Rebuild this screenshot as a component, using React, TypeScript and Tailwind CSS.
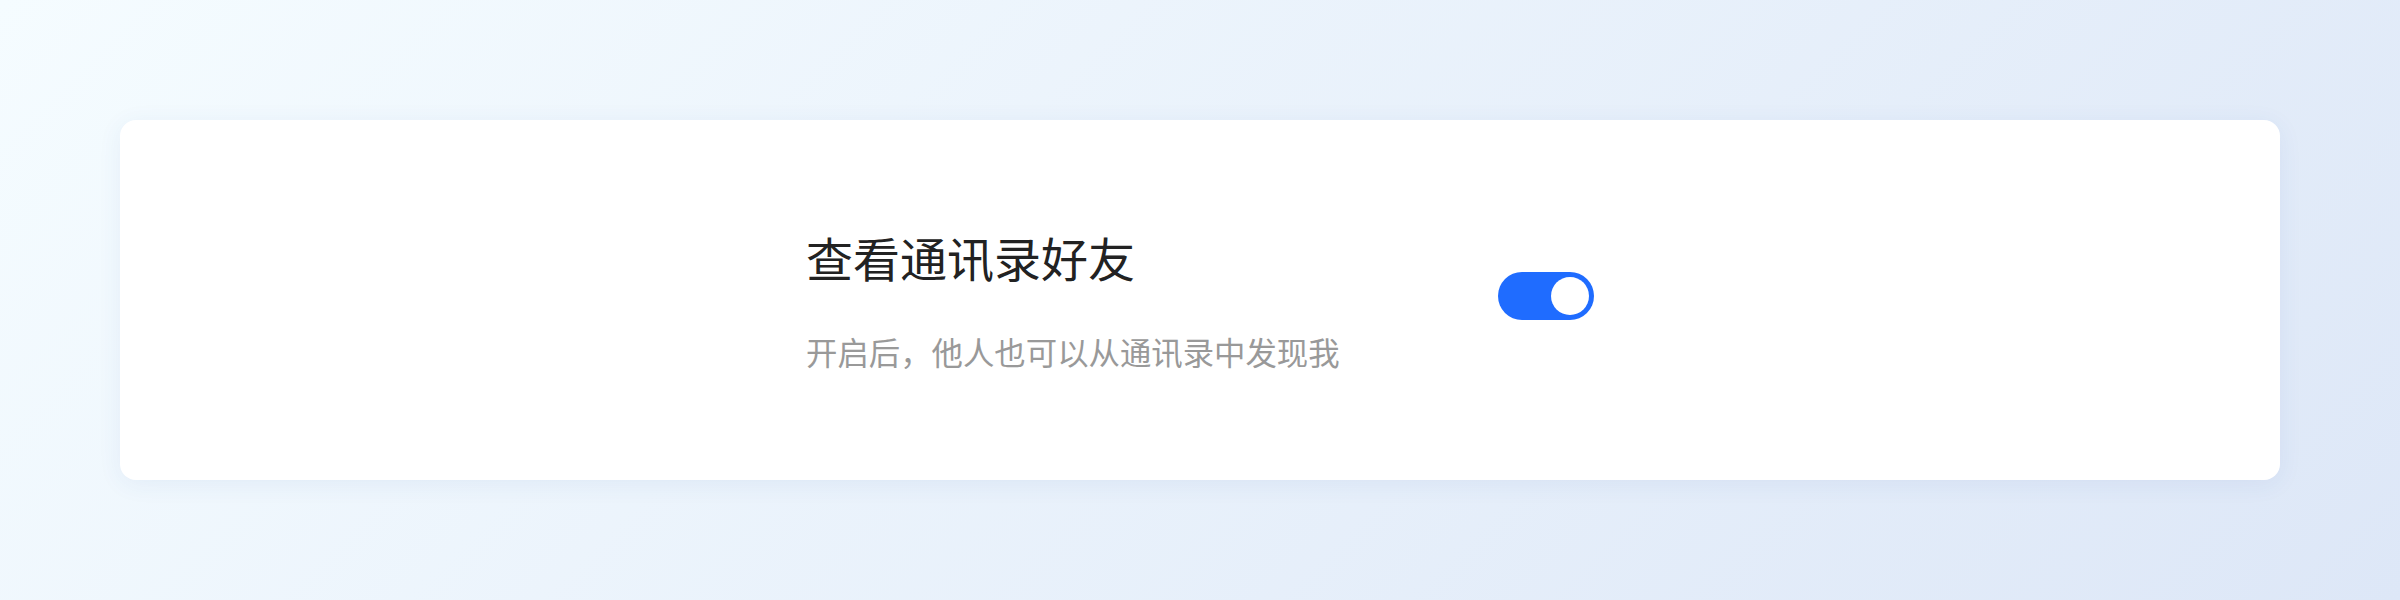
import React, { useState } from "react";

export default function App() {
  const [enabled, setEnabled] = useState(true);

  return (
    <div
      className="w-full h-[600px] px-[120px] py-[120px] bg-[linear-gradient(135deg,#f5fcff,#dde7f7)]"
      style={{ fontFamily: '"Noto Sans CJK SC", "Noto Sans", sans-serif' }}
    >
      <div className="h-[360px] w-full rounded-2xl bg-white shadow-[0_4px_24px_rgba(40,90,170,0.07)] flex items-center justify-center">
        <div className="w-[788px] flex items-center justify-between">
          <div className="flex flex-col pb-[4px]">
            <div className="text-[47px] leading-[72px] text-[#222222]">查看通讯录好友</div>
            <div className="mt-[35px] text-[31.4px] leading-[48px] text-[#999999]">
              开启后，他人也可以从通讯录中发现我
            </div>
          </div>
          <button
            type="button"
            role="switch"
            aria-checked={enabled}
            onClick={() => setEnabled(!enabled)}
            className={`mb-[9px] w-[96px] h-[48px] rounded-full p-[5px] flex items-center transition-colors ${
              enabled ? "bg-[#1f6cff] justify-end" : "bg-[#d9d9d9] justify-start"
            }`}
          >
            <span className="block w-[38px] h-[38px] rounded-full bg-white" />
          </button>
        </div>
      </div>
    </div>
  );
}
